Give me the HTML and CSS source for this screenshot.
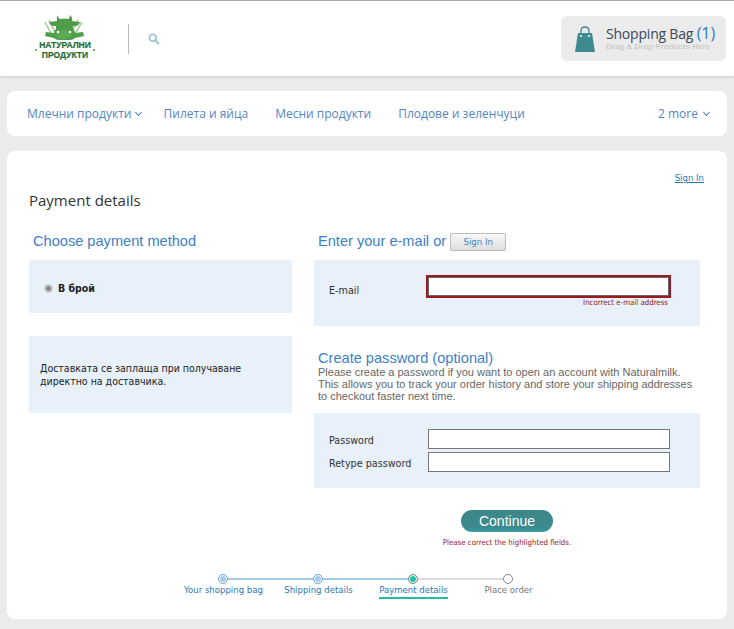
FILE: index.html
```html
<!DOCTYPE html>
<html lang="en">
<head>
    <meta charset="UTF-8">
    <meta name="viewport" content="width=device-width, initial-scale=1.0">
    <title>Payment details</title>
    <link rel="stylesheet" href="styles.css">
</head>
<body>

<header class="topbar">
    <div class="logo">
        <svg class="logo-cow" width="50" height="27" viewBox="0 0 50 27">
            <path d="M5 8l8 15M42 8l-9 15M9 6l6 12M38 6l-6 12" stroke="#a4cc96" stroke-width="1.500" fill="none"/>
            <path d="M18 1q0 3 2 4 4-1 8 0 2-1 2-4 3 3 2 6l8 1q-1 4-5 4l-2 0v3q2 2 2 4l8-1 1 4-9 2q-2 2-5 2H19q-3 0-5-2l-9-2 1-4 8 1q0-2 2-4v-3l-2 0q-4 0-5-4l8-1q-1-3 1-6z" fill="#4f9d4a"/>
            <path d="M16 20q0-4 8-4t8 4-8 5-8-5z" fill="#5cab54"/>
            <circle cx="18" cy="18" r="1.300" fill="#fff"/>
            <circle cx="30" cy="18" r="1.300" fill="#fff"/>
        </svg>
        <div class="logo-text">НАТУРАЛНИ<br>ПРОДУКТИ</div>
    </div>
    <div class="divider"></div>
    <svg class="search-icon" width="12" height="12" viewBox="0 0 12 12">
        <circle cx="4.800" cy="4.800" r="3.400" fill="none" stroke="#9cc3d4" stroke-width="1.800"/>
        <path d="M7.500 7.500l3.500 3.500" stroke="#9cc3d4" stroke-width="2.200"/>
    </svg>
    <div class="bag">
        <svg width="20" height="26" viewBox="0 0 20 26">
            <path d="M6 9V5q0-4 4-4t4 4v4" fill="none" stroke="#3f8a8e" stroke-width="1.300"/>
            <path d="M3 7h14l3 19H0z" fill="#3f8a8e"/>
            <circle cx="6" cy="10" r="1" fill="#fff"/>
            <circle cx="14" cy="10" r="1" fill="#fff"/>
        </svg>
        <div>
            <div class="bag-title">Shopping Bag <span class="bag-count">(1)</span></div>
            <div class="bag-hint">Drag &amp; Drop Products Here</div>
        </div>
    </div>
</header>

<nav class="menu">
    <a class="menu-item">Млечни продукти <span class="chev"></span></a>
    <a class="menu-item">Пилета и яйца</a>
    <a class="menu-item">Месни продукти</a>
    <a class="menu-item">Плодове и зеленчуци</a>
    <a class="menu-item more">2 more <span class="chev"></span></a>
</nav>

<main class="card">
    <div class="signin-row"><a class="signin-link">Sign In</a></div>
    <h1 class="page-title">Payment details</h1>

    <div class="columns">
        <section class="col-left">
            <h2 class="heading">Choose payment method</h2>
            <div class="panel pay-method">
                <span class="radio"></span>
                <b>В брой</b>
            </div>
            <div class="panel pay-note">Доставката се заплаща при получаване директно на доставчика.</div>
        </section>

        <section class="col-right">
            <h2 class="heading">Enter your e-mail or <button class="btn-signin">Sign In</button></h2>
            <div class="panel email-panel">
                <div class="field">
                    <label>E-mail</label>
                    <input class="input input-error" type="text">
                </div>
                <div class="field-error">Incorrect e-mail address</div>
            </div>

            <h2 class="heading heading-pass">Create password (optional)</h2>
            <p class="pass-text">Please create a password if you want to open an account with Naturalmilk.<br>This allows you to track your order history and store your shipping addresses<br>to checkout faster next time.</p>
            <div class="panel pass-panel">
                <div class="field">
                    <label>Password</label>
                    <input class="input" type="password">
                </div>
                <div class="field">
                    <label>Retype password</label>
                    <input class="input" type="password">
                </div>
            </div>
        </section>
    </div>

    <div class="actions">
        <button class="btn-continue">Continue</button>
        <div class="form-error">Please correct the highlighted fields.</div>
    </div>

    <div class="steps">
        <div class="step done"><span class="dot"></span><span class="step-label">Your shopping bag</span></div>
        <div class="step done"><span class="dot"></span><span class="step-label">Shipping details</span></div>
        <div class="step current"><span class="dot"></span><span class="step-label">Payment details</span></div>
        <div class="step todo"><span class="dot"></span><span class="step-label">Place order</span></div>
    </div>
</main>

</body>
</html>
```

FILE: styles.css
```css
* { box-sizing: border-box; }
body { margin: 0; background: #ebebeb; font-family: "Liberation Sans", Arial, sans-serif; color: #333; height: 629px; overflow: hidden; }

.topbar { display: flex; align-items: center; height: 76px; background: #fff; border-top: 1px solid #aaa; box-shadow: 0 1px 3px rgba(0, 0, 0, 0.12); padding: 0 8px 0 33px; }
.logo { width: 64px; display: flex; flex-direction: column; align-items: center; margin-top: -3px; }
.logo-cow { display: block; }
.logo-text { position: relative; font-family: "Liberation Sans", sans-serif; font-weight: bold; font-size: 8.500px; line-height: 9.500px; color: #1f6b35; -webkit-text-stroke: 0.2px #1f6b35; text-align: center; white-space: nowrap; }
.logo-text::before, .logo-text::after { content: ""; position: absolute; top: 8px; width: 2px; height: 2px; border-radius: 50%; background: #4f9d4a; }
.logo-text::before { left: -4px; }
.logo-text::after { right: -4px; }
.divider { width: 1px; height: 30px; background: #bbb; margin-left: 31px; }
.search-icon { margin-left: 19px; }
.bag { margin-left: auto; width: 165px; height: 45px; background: #ebebeb; border-radius: 6px; display: flex; align-items: center; padding-left: 14px; gap: 11px; }
.bag-title { font-family: "Open Sans", sans-serif; font-size: 14px; line-height: 17px; color: #39475a; white-space: nowrap; letter-spacing: -0.2px; }
.bag-count { color: #2a7cc0; font-size: 16px; letter-spacing: 0; }
.bag-hint { font-size: 8px; font-weight: bold; color: #cbcbcb; line-height: 10px; white-space: nowrap; }

.menu { display: flex; align-items: center; height: 45px; margin: 15px 7px 0; background: #fff; border-radius: 8px; padding: 0 16px 0 20px; font-family: "Open Sans", sans-serif; font-size: 12px; color: #5285c4; }
.menu-item { margin-right: 27px; white-space: nowrap; }
.menu-item:first-child { margin-right: 21px; }
.menu .more { margin-left: auto; margin-right: 0; }
.chev { display: inline-block; width: 5px; height: 5px; border-right: 1px solid #5285c4; border-bottom: 1px solid #5285c4; transform: rotate(45deg); margin: 0 2px 3px 1px; }
.more .chev { margin-left: 3px; }

.card { margin: 15px 7px 0; height: 468px; background: #fff; border-radius: 8px; padding: 21px 23px 0 22px; }
.signin-row { display: flex; justify-content: flex-end; height: 14px; }
.signin-link { font-family: "DejaVu Sans Condensed", "DejaVu Sans", sans-serif; font-size: 9.500px; color: #1f7bb5; text-decoration: underline; }
.page-title { font-family: "Open Sans", sans-serif; font-weight: normal; font-size: 15px; line-height: 20px; margin: 4px 0 0; color: #333; }

.columns { display: flex; gap: 22px; margin-top: 21px; }
.col-left { width: 263px; }
.col-right { width: 386px; }
.heading { font-weight: normal; font-size: 14.600px; line-height: 20px; color: #3c7fc8; margin: 0 0 9px 4px; height: 20px; white-space: nowrap; }
.panel { background: #e8f0fa; }

.pay-method { height: 53px; display: flex; align-items: center; padding: 3px 0 0 15px; font-family: "DejaVu Sans Condensed", "DejaVu Sans", sans-serif; font-size: 10.500px; color: #222; gap: 5px; }
.radio { width: 9px; height: 9px; border-radius: 50%; background: #888; border: 2px solid #ccc; }
.pay-note { height: 77px; margin-top: 23px; padding: 0 45px 0 11px; display: flex; align-items: center; font-family: "DejaVu Sans Condensed", "DejaVu Sans", sans-serif; font-size: 10.500px; line-height: 13px; color: #222; }

.btn-signin { font-family: "DejaVu Sans Condensed", "DejaVu Sans", sans-serif; font-size: 9.500px; color: #3c7fc8; width: 56px; height: 18px; padding: 0; border: 1px solid #bbb; border-radius: 2px; background: linear-gradient(#f8f8f8, #dedede); vertical-align: 1px; }

.email-panel { height: 66px; padding: 15px 29px 0 15px; }
.field { display: flex; align-items: center; height: 20px; font-family: "DejaVu Sans Condensed", "DejaVu Sans", sans-serif; font-size: 10.700px; color: #333; }
.field label { width: 99px; flex: none; padding-top: 2px; }
.input { width: 242px; height: 20px; padding: 0; border: 1px solid #777; background: #fff; border-radius: 0; }
.email-panel .field { height: 23px; }
.email-panel label { width: 97px; padding-top: 7px; }
.input-error { width: 245px; height: 23px; border: 2px solid #9c1a1e; box-shadow: inset 0 0 0 1px #666; }
.field-error { text-align: right; padding-right: 3px; font-family: "DejaVu Sans Condensed", "DejaVu Sans", sans-serif; font-size: 7.800px; line-height: 9px; color: #8c1a1a; }

.heading-pass { margin: 22px 0 0 4px; line-height: 20px; height: 20px; }
.pass-text { font-size: 11px; line-height: 12px; margin: -2px 0 11px 4px; color: #666; height: 36px; white-space: nowrap; }
.pass-panel { height: 75px; padding: 16px 30px 0 15px; display: flex; flex-direction: column; gap: 3px; }

.actions { display: flex; flex-direction: column; align-items: center; margin: 22px 0 0 338px; width: 280px; }
.btn-continue { width: 92px; height: 22px; padding: 0; border: none; border-radius: 11px; background: linear-gradient(#3d8688, #3c8b8e 80%, #35a0a4); color: #fff; font-family: "Liberation Sans", Arial, sans-serif; font-size: 14px; }
.form-error { font-family: "DejaVu Sans Condensed", "DejaVu Sans", sans-serif; font-size: 7.800px; line-height: 9px; margin-top: 6px; color: #9c1a1e; white-space: nowrap; }

.steps { display: flex; margin: 27px 0 0 146px; }
.step { position: relative; width: 95px; display: flex; flex-direction: column; align-items: center; font-family: "DejaVu Sans Condensed", "DejaVu Sans", sans-serif; font-size: 9.500px; color: #2a78b8; }
.step::before { content: ""; position: absolute; top: 4px; right: 50%; width: 95px; height: 2px; background: #a5c9e8; }
.step:first-child::before { display: none; }
.step.todo::before { background: #d8dbdf; }
.dot { position: relative; z-index: 1; width: 10px; height: 10px; border-radius: 50%; background: #a5c9e8; border: 1px solid #7fa8cc; box-shadow: inset 0 0 0 1px #fff; }
.step-label { white-space: nowrap; line-height: 12px; margin-left: 2px; padding-bottom: 1px; }
.step.current .dot { background: #1fbf9f; border-color: #888; }
.step.current .step-label { border-bottom: 2px solid #1fbf9f; }
.step.todo { color: #777; }
.step.todo .dot { background: #fff; border-color: #888; }
```
